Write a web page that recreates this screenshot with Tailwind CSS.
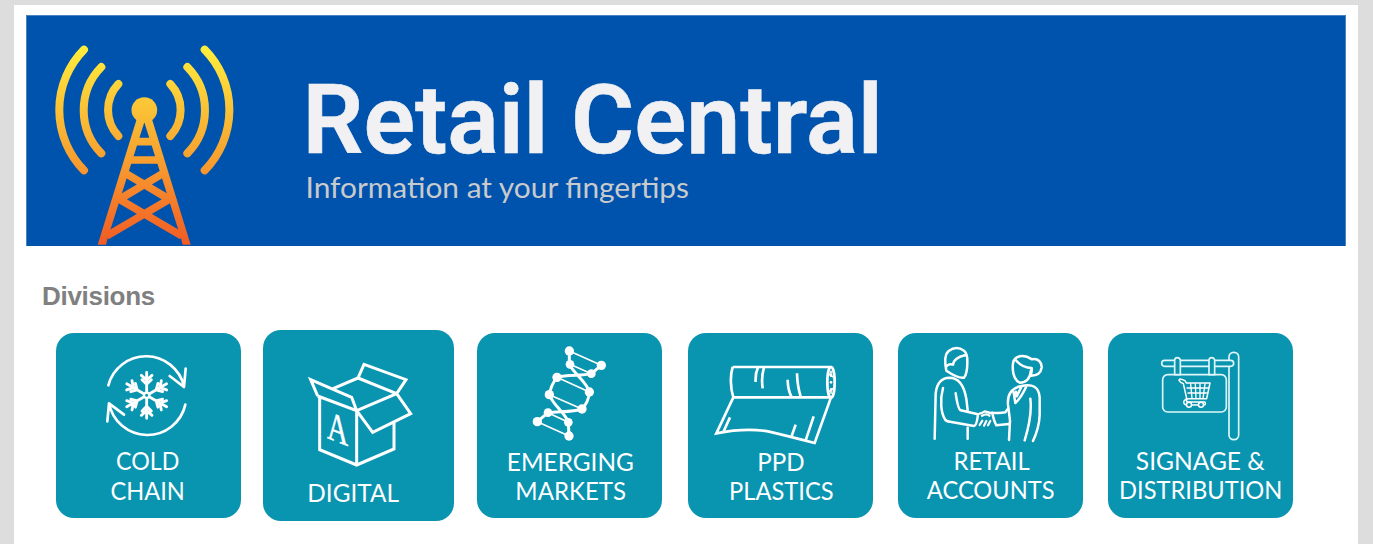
<!DOCTYPE html>
<html lang="en">
<head>
<meta charset="utf-8">
<title>Retail Central</title>
<script src="https://cdn.jsdelivr.net/npm/@tailwindcss/browser@4"></script>
</head>
<body class="bg-[#dddddd] h-[544px] overflow-hidden pt-[5px] pl-[14px]">
<main class="bg-white w-[1344px] h-[539px] pt-[10px]">
  <header class="ml-[12px] w-[1320px] h-[231px] bg-[#0053ad] flex border-t border-x border-[#4c84c0]">
    <svg class="-mt-px -ml-px w-[207px] h-[231px] shrink-0 overflow-visible" viewBox="78 45 621 693" fill="none">
      <defs><linearGradient id="g" gradientUnits="userSpaceOnUse" x1="0" y1="140" x2="0" y2="735">
        <stop offset="0" stop-color="#ffee3d"/><stop offset=".32" stop-color="#fac136"/><stop offset=".62" stop-color="#f7982e"/><stop offset=".82" stop-color="#f47629"/><stop offset="1" stop-color="#f15a24"/>
      </linearGradient></defs>
      <g stroke="url(#g)" stroke-width="24" stroke-linecap="round">
        <path d="M252 149A258 258 0 0 0 252 511M304 201A185 185 0 0 0 304 460M355 252A114 114 0 0 0 355 408"/>
        <path d="M614 149A258 258 0 0 1 614 511M562 201A185 185 0 0 1 562 460M511 252A114 114 0 0 1 511 408"/>
      </g>
      <circle cx="433" cy="330" r="38.500" fill="url(#g)"/>
      <path fill="url(#g)" d="M410 358L433 367L323 715L318 734H293ZM456 358L433 367L543 715L548 734H572Z"/>
      <g stroke="url(#g)" stroke-width="23"><path d="M405 425H461V425.100M388 480H478V480.100"/><path d="M380 522L508 598L320 708M486 522L358 598L546 708"/></g>
    </svg>
    <svg class="-mt-px w-[1112px] h-[231px] shrink-0" viewBox="233 15 1112 231">
      <g fill="#f1f0f2" stroke="#f1f0f2" stroke-width=".6" font-family="Roboto, sans-serif" font-weight="600" font-size="97">
        <text x="302.500" y="153" textLength="246" lengthAdjust="spacingAndGlyphs">Retail</text>
        <text x="571" y="153" textLength="312" lengthAdjust="spacingAndGlyphs">Central</text>
      </g>
      <text x="305.500" y="197.500" fill="#c9cacc" font-family="Lato, sans-serif" font-size="28" textLength="383.500" lengthAdjust="spacingAndGlyphs">Information at your fingertips</text>
    </svg>
  </header>

  <h1 class="mt-[33px] ml-[28px] h-[34px] leading-[34px] text-[26px] tracking-[-0.3px] font-bold text-[#808080] font-['Liberation_Sans',Arial,sans-serif]">Divisions</h1>

  <section class="mt-[17.400px] ml-[42.400px] flex items-center text-white">
    <a class="block size-[185px] rounded-[18px] bg-[#0994b0] shrink-0">
      <svg class="size-full" viewBox="49 39 555 555" fill="none" stroke="#fff" stroke-linecap="round" stroke-linejoin="round">
        <g stroke-width="8"><path d="M206 196A117 117 0 0 1 433 199M390 168L433 201L438 146M437 254A117 117 0 0 1 208 250M253 284L208 250L203 304"/></g>
        <g id="arm" stroke-width="8.500"><path d="M321 216V157M305 166L321 180L337 166M307 179L321 193L335 179"/></g>
        <use href="#arm" transform="rotate(60 321 226)"/><use href="#arm" transform="rotate(120 321 226)"/><use href="#arm" transform="rotate(180 321 226)"/><use href="#arm" transform="rotate(240 321 226)"/><use href="#arm" transform="rotate(300 321 226)"/>
        <circle cx="321" cy="226" r="8" stroke-width="7"/>
        <g fill="#fff" stroke="none" font-family="Lato, sans-serif" font-size="76" text-anchor="middle"><text x="324" y="449.500" textLength="190" lengthAdjust="spacingAndGlyphs">COLD</text><text x="324" y="538.500" textLength="223" lengthAdjust="spacingAndGlyphs">CHAIN</text></g>
      </svg>
    </a>
    <a class="block ml-[21.700px] size-[191px] rounded-[18px] bg-[#0994b0] shrink-0">
      <svg class="size-full" viewBox="24 30 573 573" fill="none" stroke="#fff" stroke-width="9" stroke-linejoin="miter">
        <path d="M194 230V389L305 435L417 387V305M305 272V435M188 228L305 272L290 232L167 179L188 228M194 230L188 228M234 206L309 174L327 133L453 179L425 221L309 174M305 272L425 221L467 281L353 337Z"/>
        <g fill="#fff" stroke="none" font-family="Lato, sans-serif" font-size="77"><text x="157" y="545" textLength="275" lengthAdjust="spacingAndGlyphs">DIGITAL</text>
        <text transform="matrix(.72 .28 0 1 216 354)" font-family="Liberation Serif, serif" font-size="122" stroke="#fff" stroke-width="1.500">A</text></g>
      </svg>
    </a>
    <a class="block ml-[23px] size-[185px] rounded-[18px] bg-[#0994b0] shrink-0">
      <svg class="size-full" viewBox="21 25 555 555" fill="none" stroke="#fff">
        <g stroke-width="5"><path d="M298 79L394 122M300 119L364 147M261 158L358 202M238 210L336 253M234 264L295 293M202 291L297 334"/></g>
        <g stroke-width="9"><path d="M298 79V119C310 145 352 173 358 202Q356 232 336 253C310 263 270 260 234 264L202 291M394 122L364 147C335 154 295 150 261 158Q243 180 238 210C247 240 286 264 295 293L297 334"/></g>
        <g fill="#fff" stroke="none"><circle cx="298" cy="79" r="14"/><circle cx="394" cy="122" r="14"/><circle cx="300" cy="119" r="13"/><circle cx="364" cy="147" r="13"/><circle cx="261" cy="158" r="14"/><circle cx="358" cy="202" r="14"/><circle cx="238" cy="210" r="14"/><circle cx="336" cy="253" r="14"/><circle cx="234" cy="264" r="13"/><circle cx="295" cy="293" r="13"/><circle cx="202" cy="291" r="14"/><circle cx="297" cy="334" r="14"/></g>
        <g fill="#fff" stroke="none" font-family="Lato, sans-serif" font-size="76" text-anchor="middle"><text x="301" y="438" textLength="381" lengthAdjust="spacingAndGlyphs">EMERGING</text><text x="302" y="526" textLength="332" lengthAdjust="spacingAndGlyphs">MARKETS</text></g>
      </svg>
    </a>
    <a class="block ml-[26px] size-[185px] rounded-[18px] bg-[#0994b0] shrink-0">
      <svg class="size-full" viewBox="24 25 555 555" fill="none" stroke="#fff" stroke-width="8">
        <path d="M158 127H453M158 218H453M158 127C150 152 151 190 160 218L109 326Q195 309 264 320Q316 332 404 355L453 218"/>
        <ellipse cx="453" cy="173" rx="11" ry="46"/><path d="M453 138V157M453 190V207" stroke-width="5"/><circle cx="453" cy="173" r="4" fill="#fff" stroke="none"/>
        <path d="M446 148L460 157M446 201L460 191" stroke-width="5"/>
        <path d="M234 128Q225 148 227 172M252 128Q243 158 248 191M323 165Q323 193 334 216M351 146Q352 184 362 216M150 278L130 322M347 300L335 334M401 275L377 347"/>
        <g fill="#fff" stroke="none" font-family="Lato, sans-serif" font-size="76" text-anchor="middle"><text x="303" y="439" textLength="142" lengthAdjust="spacingAndGlyphs">PPD</text><text x="304" y="527" textLength="314" lengthAdjust="spacingAndGlyphs">PLASTICS</text></g>
      </svg>
    </a>
    <a class="block ml-[25px] size-[185px] rounded-[18px] bg-[#0994b0] shrink-0">
      <svg class="size-full" viewBox="24 25 555 555" fill="none" stroke="#fff" stroke-width="7.500" stroke-linecap="round" stroke-linejoin="round">
        <path d="M169 138Q160 92 176 79Q199 62 222 78Q233 86 232 112Q232 148 222 159Q205 162 169 138ZM170 124Q178 116 189 120C190 105 206 96 227 91"/>
        <path d="M134 342L137 206Q142 160 178 159Q218 159 229 222L233 257M159 190C149 227 153 264 165 284Q168 290 180 291L252 304Q260 303 264 269L212 257Q204 254 197 206M233 309V342"/>
        <path d="M269 267Q277 265 284 260Q293 262 304 266M276 273Q290 265 298 273" stroke-width="7"/>
        <path d="M277 288L269 301M289 289L282 303M301 289L294 302" stroke-width="6.500"/>
        <path d="M304 264Q330 267 346 263L354 252M307 264Q311 288 319 302L357 298"/>
        <path d="M370 146Q363 104 383 97Q402 89 426 104C444 100 456 113 455 129Q451 154 421 153M423 137Q419 174 389 174Q375 168 370 146M421 153Q427 141 425 130Q397 130 377 106"/>
        <path d="M357 346L360 288L354 240Q350 195 391 185Q446 171 449 218V270Q448 308 429 349M421 222C427 268 414 314 404 347M371 203L376 235Q394 218 410 183M378 201L380 215L394 187"/>
        <g fill="#fff" stroke="none" font-family="Lato, sans-serif" font-size="76" text-anchor="middle"><text x="305" y="435" textLength="229" lengthAdjust="spacingAndGlyphs">RETAIL</text><text x="302" y="524" textLength="383" lengthAdjust="spacingAndGlyphs">ACCOUNTS</text></g>
      </svg>
    </a>
    <a class="block ml-[25.300px] size-[185px] rounded-[18px] bg-[#0994b0] shrink-0">
      <svg class="size-full" viewBox="25 25 555 555" fill="none" stroke="#e0f7fa" stroke-width="5" stroke-linejoin="round" stroke-linecap="round">
        <rect x="388" y="83" width="29" height="262" rx="14"/>
        <rect x="189" y="150" width="191" height="112" rx="15"/>
        <rect x="186" y="107" width="216" height="18" rx="9" fill="#0994b0"/>
        <path fill="#0994b0" stroke-linecap="butt" d="M225 150V106Q226 99 233 99T242 106V150ZM328 150V106Q329 99 336 99T345 106V150Z"/>
        <g stroke="#fff">
          <path d="M238 167Q238 161 246 164L256 168L260 175H331L321 222H267Q257 226 262 232H316Q320 240 312 241H260Q250 239 253 229L261 221L251 177L243 173Z" stroke-width="4.500"/>
          <path d="M262 190H327M265 205H324" stroke-width="4"/>
          <path d="M273 178L277 221M287 178L289 221M301 178V221M316 178L310 221" stroke-width="4"/>
          <circle cx="268" cy="240" r="7.500" fill="#0994b0" stroke-width="4.500"/><circle cx="304" cy="240" r="7.500" fill="#0994b0" stroke-width="4.500"/>
        </g>
        <g fill="#fff" stroke="none" font-family="Lato, sans-serif" font-size="76" text-anchor="middle"><text x="302" y="435" textLength="387" lengthAdjust="spacingAndGlyphs">SIGNAGE &amp;</text><text x="303" y="524" textLength="490" lengthAdjust="spacingAndGlyphs">DISTRIBUTION</text></g>
      </svg>
    </a>
  </section>
</main>
</body>
</html>
